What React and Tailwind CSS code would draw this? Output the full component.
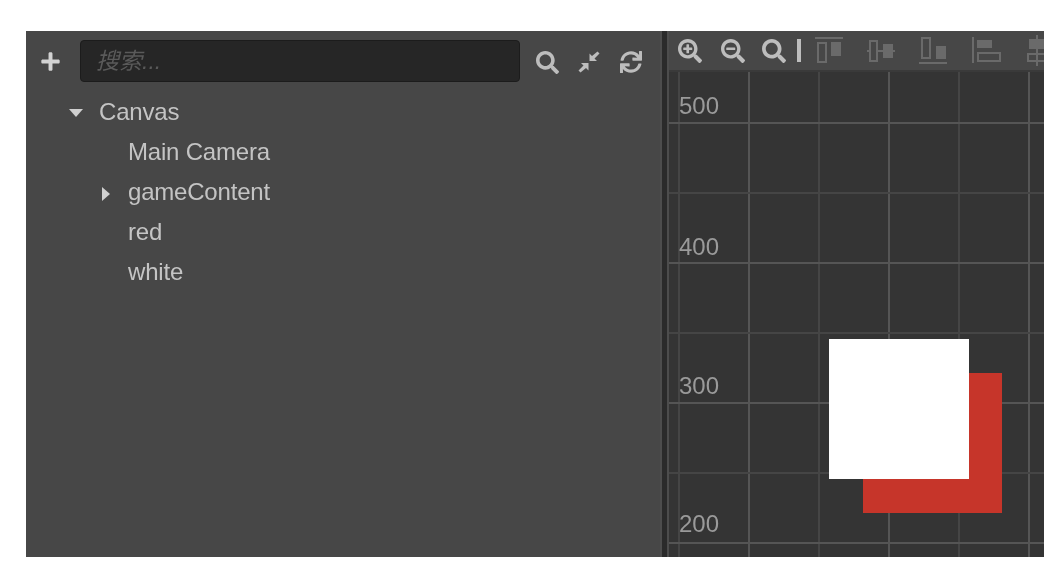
import React from 'react';
import { FaPlus, FaSearch, FaSearchPlus, FaSearchMinus, FaSync } from 'react-icons/fa';

const nodes = [
  { name: 'Canvas', arrow: 'down', indent: 'pl-[73px]' },
  { name: 'Main Camera', indent: 'pl-[102px]' },
  { name: 'gameContent', arrow: 'right', indent: 'pl-[102px]' },
  { name: 'red', indent: 'pl-[102px]' },
  { name: 'white', indent: 'pl-[102px]' },
];

function TreeRow({ node }) {
  return (
    <div className={`relative h-10 flex items-center text-[24px] tracking-[-0.2px] text-[#c4c4c4] ${node.indent}`}>
      {node.arrow === 'down' && (
        <span className="absolute left-[43px] top-[17px] w-0 h-0 border-x-[7px] border-x-transparent border-t-[8px] border-t-[#d0d0d0]" />
      )}
      {node.arrow === 'right' && (
        <span className="absolute left-[76px] top-[15px] w-0 h-0 border-y-[7px] border-y-transparent border-l-[8px] border-l-[#d0d0d0]" />
      )}
      {node.name}
    </div>
  );
}

function CollapseIcon() {
  return (
    <svg width="22" height="22" viewBox="0 0 22 22" fill="#bdbdbd">
      <path d="M19.5 0.5l2 2-5 5 2.5 2.5h-7.5V2.5l2.5 2.5z" />
      <path d="M2.5 21.5l-2-2 5-5-2.5-2.5h7.5v7.5l-2.5-2.5z" />
    </svg>
  );
}

function AlignIcon({ width = 28, className = '', lines, boxes, solid }) {
  return (
    <svg width={width} height="32" viewBox={`0 0 ${width} 32`} className={`shrink-0 ${className}`}>
      <path d={lines} fill="none" stroke="#6a6a6a" strokeWidth="2" />
      <path d={boxes} fill="none" stroke="#6a6a6a" strokeWidth="2" />
      <path d={solid} fill="#6a6a6a" />
    </svg>
  );
}

export default function App() {
  const verticals = [679, 749, 819, 889, 959, 1029];
  const horizontals = [123, 193, 263, 333, 403, 473, 543];
  const major = [749, 889, 1029, 123, 263, 403, 543];

  return (
    <div className="w-[1052px] h-[564px] bg-white pl-[26px] pr-2 pt-[31px] pb-[7px] font-['Liberation_Sans',sans-serif]">
      <div className="flex h-full bg-[#474747] blur-[0.5px]">
        {/* node tree */}
        <div className="w-[634px] shrink-0">
          <div className="h-[60px] flex items-center pl-[14px]">
            <FaPlus size={21} color="#d2d2d2" className="shrink-0" />
            <div className="ml-[19px] w-[440px] h-[42px] shrink-0 flex items-center rounded-[4px] bg-[#262626] border border-[#1c1c1c] pl-[15px] text-[23px] italic text-[#5a5a5a] font-['Liberation_Sans','Noto_Sans_CJK_SC',sans-serif]">
              搜索...
            </div>
            <FaSearch size={23} color="#bdbdbd" className="ml-[16px] mt-[3px] shrink-0" />
            <span className="ml-[19px] mt-[1px]"><CollapseIcon /></span>
            <FaSync size={22} color="#bdbdbd" className="ml-[20px] mt-[1px] shrink-0" />
          </div>
          <div className="mt-px">
            {nodes.map((node) => (
              <TreeRow key={node.name} node={node} />
            ))}
          </div>
        </div>

        <div className="w-[2px] bg-[#4d4d4d]" />
        <div className="w-[5px] bg-[#2b2b2b]" />
        <div className="w-[2px] bg-[#4d4d4d]" />

        {/* scene view */}
        <div className="flex-1 min-w-0 flex flex-col overflow-hidden">
          <div className="h-[41px] shrink-0 flex items-center bg-[#474747] border-b-2 border-[#3a3a3a] pl-[9px] overflow-hidden">
            <FaSearchPlus size={24} color="#bdbdbd" className="shrink-0" />
            <FaSearchMinus size={24} color="#bdbdbd" className="ml-[19px] shrink-0" />
            <FaSearch size={24} color="#bdbdbd" className="ml-[17px] shrink-0" />
            <span className="ml-[11px] w-[4px] h-[23px] bg-[#bdbdbd] shrink-0" />
            <AlignIcon
              className="ml-[14px]"
              lines="M0 3H28"
              boxes="M3 8H11V27H3Z"
              solid="M16 7H26V21H16Z"
            />
            <AlignIcon
              className="ml-[24px]"
              lines="M0 16H2M11 16H16M26 16H28"
              boxes="M3 6H10V26H3Z"
              solid="M16 9H26V23H16Z"
            />
            <AlignIcon
              className="ml-[24px]"
              lines="M0 28H28"
              boxes="M3 3H11V23H3Z"
              solid="M17 11H27V24H17Z"
            />
            <AlignIcon
              className="ml-[25px]"
              width={30}
              lines="M1 2V28"
              boxes="M6 18H28V26H6Z"
              solid="M5 5H20V13H5Z"
            />
            <AlignIcon
              className="ml-[25px]"
              width={20}
              lines="M10 0V31"
              boxes="M1 19H19V26H1Z"
              solid="M2 4H18V14H2Z"
            />
          </div>
          <div className="relative flex-1 bg-[#343434] overflow-hidden">
            <svg className="absolute -left-[669px] -top-[72px]" width="1052" height="564">
              {verticals.map((x) => (
                <line key={x} x1={x} x2={x} y1="72" y2="564" stroke={major.includes(x) ? '#555555' : '#454545'} strokeWidth="2" />
              ))}
              {horizontals.map((y) => (
                <line key={y} y1={y} y2={y} x1="669" x2="1052" stroke={major.includes(y) ? '#555555' : '#454545'} strokeWidth="2" />
              ))}
            </svg>
            <span className="absolute left-[10px] top-[24px] text-[24px] leading-5 text-[#9a9a9a]">500</span>
            <span className="absolute left-[10px] top-[165px] text-[24px] leading-5 text-[#9a9a9a]">400</span>
            <span className="absolute left-[10px] top-[304px] text-[24px] leading-5 text-[#9a9a9a]">300</span>
            <span className="absolute left-[10px] top-[442px] text-[24px] leading-5 text-[#9a9a9a]">200</span>
            <div className="absolute left-[194px] top-[301px] w-[139px] h-[140px] bg-[#c6352a]" />
            <div className="absolute left-[160px] top-[267px] w-[140px] h-[140px] bg-white" />
          </div>
        </div>
      </div>
    </div>
  );
}
